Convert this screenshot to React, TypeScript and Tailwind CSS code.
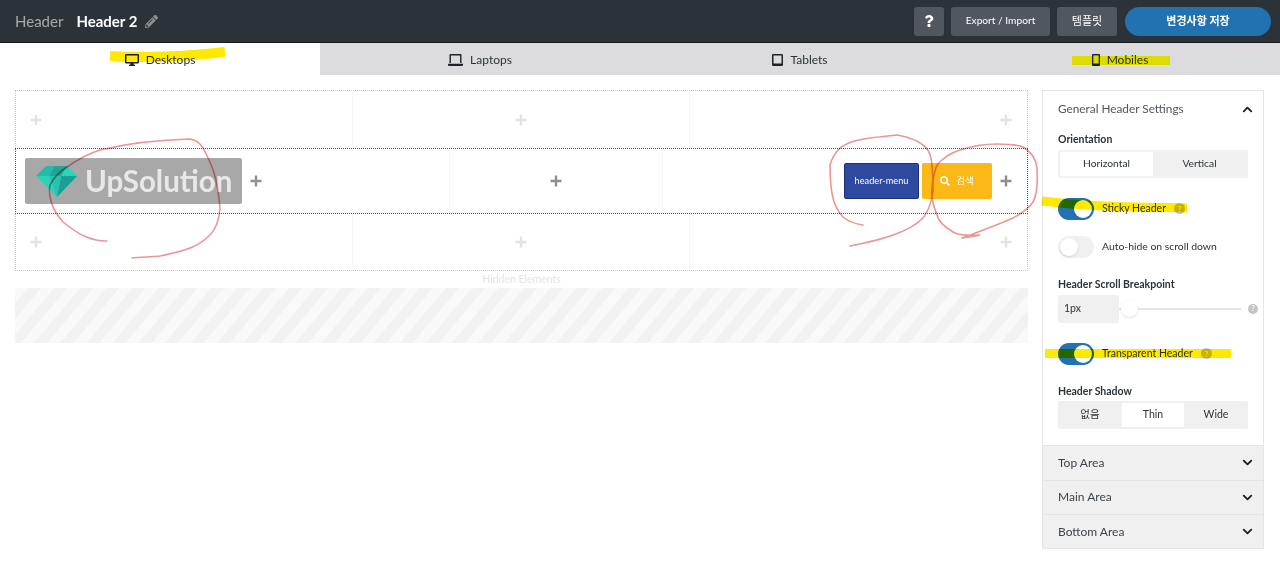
import { ChevronUp, ChevronDown } from 'lucide-react';
import { FaPencilAlt, FaSearch, FaQuestion } from 'react-icons/fa';

function DesktopIcon() {
  return (
    <svg width="14" height="12" viewBox="0 0 14 12" className="text-[#1d2327] shrink-0">
      <path fillRule="evenodd" fill="currentColor" d="M1 0h12a1 1 0 0 1 1 1v7.500a1 1 0 0 1-1 1H8.500l.3 1.200H10V12H4v-1.300h1.200l.3-1.200H1a1 1 0 0 1-1-1V1a1 1 0 0 1 1-1zm.4 1.400v6.700h11.200V1.400z" />
    </svg>
  );
}

function LaptopIcon() {
  return (
    <svg width="15" height="12" viewBox="0 0 15 12" className="text-[#1d2327] shrink-0">
      <path fillRule="evenodd" fill="currentColor" d="M2.500 0h10a1 1 0 0 1 1 1v8h-1.400V1.400H2.900V9H1.500V1a1 1 0 0 1 1-1zM0 9.800h15v1.100a1 1 0 0 1-1 1H1a1 1 0 0 1-1-1z" />
    </svg>
  );
}

function TabletIcon() {
  return (
    <svg width="11" height="12" viewBox="0 0 11 12" className="text-[#1d2327] shrink-0">
      <path fillRule="evenodd" fill="currentColor" d="M1.200 0h8.600A1.200 1.200 0 0 1 11 1.200v9.600A1.200 1.200 0 0 1 9.800 12H1.200A1.200 1.200 0 0 1 0 10.800V1.200A1.200 1.200 0 0 1 1.200 0zm.3 1.500v8h8v-8z" />
    </svg>
  );
}

function MobileIcon() {
  return (
    <svg width="8" height="12" viewBox="0 0 8 12" className="text-[#1d2327] shrink-0">
      <path fillRule="evenodd" fill="currentColor" d="M1 0h6a1 1 0 0 1 1 1v10a1 1 0 0 1-1 1H1a1 1 0 0 1-1-1V1a1 1 0 0 1 1-1zm.3 1.500v8h5.400v-8z" />
    </svg>
  );
}

function Plus({ dark }: { dark?: boolean }) {
  return (
    <svg width="12" height="12" viewBox="0 0 12 12" className={dark ? 'text-[#8c8f94] shrink-0' : 'text-[#e2e3e5] shrink-0'}>
      <path d="M6 0.5v11M0.5 6h11" stroke="currentColor" strokeWidth="2.4" />
    </svg>
  );
}

function Help({ size = 'w-[11px] h-[11px] text-[8px]' }: { size?: string }) {
  return (
    <span className={`${size} rounded-full bg-[#c3c4c7] text-white font-bold flex items-center justify-center shrink-0`}>?</span>
  );
}

function Toggle({ on }: { on?: boolean }) {
  return on ? (
    <div className="w-9 h-[22px] rounded-full bg-[#2271b1] flex items-center justify-end pr-[2px] shrink-0">
      <div className="w-[18px] h-[18px] rounded-full bg-white" />
    </div>
  ) : (
    <div className="w-9 h-[22px] rounded-full bg-[#f0f0f0] flex items-center pl-[2px] shrink-0">
      <div className="w-[18px] h-[18px] rounded-full bg-white shadow-sm" />
    </div>
  );
}

function OuterRow({ last }: { last?: boolean }) {
  return (
    <div className={`${last ? 'h-[57px] border-b' : 'h-[58px] border-t'} flex border-x border-dotted border-[#c3c4c7]`}>
      <div className="w-[337px] pl-[14px] flex items-center border-r border-[#f6f6f6]"><Plus /></div>
      <div className="w-[337px] flex items-center justify-center border-r border-[#f6f6f6]"><Plus /></div>
      <div className="flex-1 pr-[15px] flex items-center justify-end"><Plus /></div>
    </div>
  );
}

function Accordion({ title }: { title: string }) {
  return (
    <div className="h-[34.4px] bg-[#f0f0f0] border-t border-[#e5e5e5] flex items-center justify-between pl-[15px] pr-[8px] text-[#3c434a]">
      <span className="text-[12px]">{title}</span>
      <ChevronDown size={15} strokeWidth={3} className="text-[#1d2327]" />
    </div>
  );
}

export default function App() {
  return (
    <div className="relative w-[1280px] h-[583px] overflow-hidden bg-white font-['Lato','Noto_Sans_CJK_KR',sans-serif] text-[#2c3338]">
      {/* Top bar */}
      <header className="h-[43px] bg-[#2c3338] border-b border-[#16191c] flex items-center pl-[15px] pr-[9px]">
        <span className="text-[15px] text-[#a7aaad]">Header</span>
        <span className="ml-[13px] text-[15px] font-bold text-white">Header 2</span>
        <FaPencilAlt size={13} className="ml-[8px] text-[#8c8f94]" />
        <div className="ml-auto flex items-center">
          <button className="w-[30px] h-[29px] rounded-[3px] bg-[#50575e] text-white flex items-center justify-center">
            <FaQuestion size={12} />
          </button>
          <button className="ml-[7px] w-[99px] h-[29px] rounded-[3px] bg-[#50575e] text-white text-[10.2px]">Export / Import</button>
          <button className="ml-[7px] w-[60px] h-[29px] rounded-[3px] bg-[#50575e] text-white text-[11px]">템플릿</button>
          <button className="ml-[8px] w-[146px] h-[29px] rounded-full bg-[#2271b1] text-white text-[11px] font-bold">변경사항 저장</button>
        </div>
      </header>

      {/* Device tabs */}
      <nav className="h-[32px] grid grid-cols-4 bg-[#dcdcde] text-[12px] text-[#2c3338]">
        <div className="pt-[1px] bg-white flex items-center justify-center gap-[7px]"><DesktopIcon />Desktops</div>
        <div className="pt-[1px] flex items-center justify-center gap-[7px]"><LaptopIcon />Laptops</div>
        <div className="pt-[1px] flex items-center justify-center gap-[7px]"><TabletIcon />Tablets</div>
        <div className="pt-[1px] flex items-center justify-center gap-[7px]"><MobileIcon />Mobiles</div>
      </nav>

      <div className="flex items-start pt-[15px] pl-[15px]">
        {/* Builder canvas */}
        <main className="w-[1013px]">
          <OuterRow />
          <div className="h-[66px] flex border border-dotted border-[#50575e]">
            <div className="w-[434px] pl-[9px] flex items-center border-r border-[#f6f6f6]">
              <div className="w-[217px] h-[46px] rounded-[2px] bg-[#a8a8a8] flex items-center pl-[11px]">
                <svg width="41" height="32" viewBox="0 0 41 32" className="shrink-0">
                  <path d="M10 1h21l10 10-20 21L0 11z" fill="#2bd4b8" />
                  <path d="M10 1h9l-6 10H0z" fill="#27b8a8" />
                  <path d="M19 1h12l-6 10H13z" fill="#1fa596" />
                  <path d="M25 11h16L21 32z" fill="#1c9f92" />
                  <path d="M13 11h12l-4 21z" fill="#26c2ad" />
                </svg>
                <span className="ml-[8px] text-[29.5px] leading-none font-bold text-[#e8e8e8]">UpSolution</span>
              </div>
              <div className="ml-[8px] flex"><Plus dark /></div>
            </div>
            <div className="w-[213px] flex items-center justify-center border-r border-[#f6f6f6]"><Plus dark /></div>
            <div className="flex-1 flex items-center justify-end pr-[15px]">
              <div className="w-[75px] h-[36px] rounded-[2px] bg-[#2e4a9e] border border-[#1c2f7a] text-white text-[9.2px] flex items-center justify-center">header-menu</div>
              <div className="ml-[3px] w-[70px] h-[36px] rounded-[2px] bg-[#fcb817] text-white text-[9.5px] flex items-center justify-center gap-[6px]">
                <FaSearch size={10} />검색
              </div>
              <div className="ml-[8px] flex"><Plus dark /></div>
            </div>
          </div>
          <OuterRow last />
          <div className="h-[17px] flex items-center justify-center text-[10.5px] text-[#e4e4e4]">Hidden Elements</div>
          <div className="h-[55px] bg-[repeating-linear-gradient(130deg,#f9f9f9_0,#f9f9f9_10px,#f2f2f2_10px,#f2f2f2_20px)]" />
        </main>

        {/* Settings panel */}
        <aside className="ml-[14px] w-[222px] border border-[#e5e5e5] bg-white">
          <div className="h-[36px] flex items-center justify-between pl-[15px] pr-[8px]">
            <span className="text-[11.8px] text-[#50575e]">General Header Settings</span>
            <ChevronUp size={15} strokeWidth={3} className="text-[#1d2327]" />
          </div>
          <div className="px-[15px] pb-[16px]">
            <div className="mt-[5px] text-[10.5px] font-bold">Orientation</div>
            <div className="mt-[2px] w-[190px] h-[28px] p-[2px] bg-[#f0f0f0] rounded-[2px] flex text-[10.3px]">
              <div className="w-[93px] bg-white flex items-center justify-center">Horizontal</div>
              <div className="flex-1 flex items-center justify-center">Vertical</div>
            </div>
            <div className="mt-[20px] flex items-center gap-[8px] text-[10.5px]">
              <Toggle on />Sticky Header<Help />
            </div>
            <div className="mt-[16px] flex items-center gap-[8px] text-[10.4px]">
              <Toggle />Auto-hide on scroll down
            </div>
            <div className="mt-[19px] text-[10.5px] font-bold">Header Scroll Breakpoint</div>
            <div className="mt-[2px] relative w-[200px] flex items-center">
              <div className="w-[61px] h-[28px] bg-[#f0f0f0] rounded-[2px] flex items-center pl-[6px] text-[10.5px]">1px</div>
              <div className="w-[122px] h-[2px] bg-[#e5e5e5] relative">
                <div className="absolute -top-[7.5px] left-[2px] w-[17px] h-[17px] rounded-full bg-white shadow" />
              </div>
              <div className="ml-[7px]"><Help size="w-[10px] h-[10px] text-[7px]" /></div>
            </div>
            <div className="mt-[20px] flex items-center gap-[8px] text-[10.5px]">
              <Toggle on />Transparent Header<Help />
            </div>
            <div className="mt-[19px] text-[10.5px] font-bold">Header Shadow</div>
            <div className="mt-[2px] w-[190px] h-[28px] py-[2px] bg-[#f0f0f0] rounded-[2px] flex text-[10.5px]">
              <div className="w-[64px] flex items-center justify-center">없음</div>
              <div className="w-[62px] bg-white flex items-center justify-center">Thin</div>
              <div className="flex-1 flex items-center justify-center">Wide</div>
            </div>
          </div>
          <Accordion title="Top Area" />
          <Accordion title="Main Area" />
          <Accordion title="Bottom Area" />
        </aside>
      </div>

      {/* Hand-drawn markup on top of the screenshot */}
      <svg width="1280" height="583" viewBox="0 0 1280 583" fill="none" className="absolute inset-0 pointer-events-none mix-blend-multiply">
        <g stroke="#ffe900" strokeLinecap="butt">
          <path d="M110 56 C 145 58 190 56 225 52" strokeWidth="10" />
          <path d="M1072 60.5 H1170" strokeWidth="9" stroke="#ffff00" />
          <path d="M1042 201 C 1090 207 1140 207 1187 208" strokeWidth="9" />
          <path d="M1045 353.5 H1231" strokeWidth="9" />
        </g>
        <g stroke="#e98a8a" strokeWidth="1.6" strokeLinecap="round" opacity="0.9">
          <path d="M107 241 C 92 241 80 236 63 222 C 52 210 48 196 50 185 C 55 175 62 170 67 167 C 80 158 90 153 100 150 C 125 144 150 140 190 139 C 197 140 200 143 203 148 C 212 165 217 175 220 208 C 219 222 215 230 210 235 C 200 245 190 250 160 256 C 150 257 140 257 132 258" />
          <path d="M863 225 C 855 224 848 221 843 217 C 835 208 830 198 830 165 C 832 158 836 152 840 148 C 848 142 855 139 897 135 C 908 137 917 140 923 145 C 930 150 933 156 933 192 C 931 205 927 213 923 218 C 915 226 905 231 893 235 C 880 240 865 243 850 246" />
          <path d="M962 238 C 972 237 975 236 980 235 C 965 236 958 235 953 232 C 943 226 938 220 937 215 C 933 205 931 195 932 188 C 933 175 935 170 937 165 C 943 158 950 153 960 150 C 972 146 985 144 997 144 C 1010 144 1018 145 1023 147 C 1032 152 1036 160 1037 168 C 1038 185 1037 195 1033 202 C 1028 210 1020 214 1013 218 C 995 226 978 232 962 238" />
        </g>
      </svg>
    </div>
  );
}
